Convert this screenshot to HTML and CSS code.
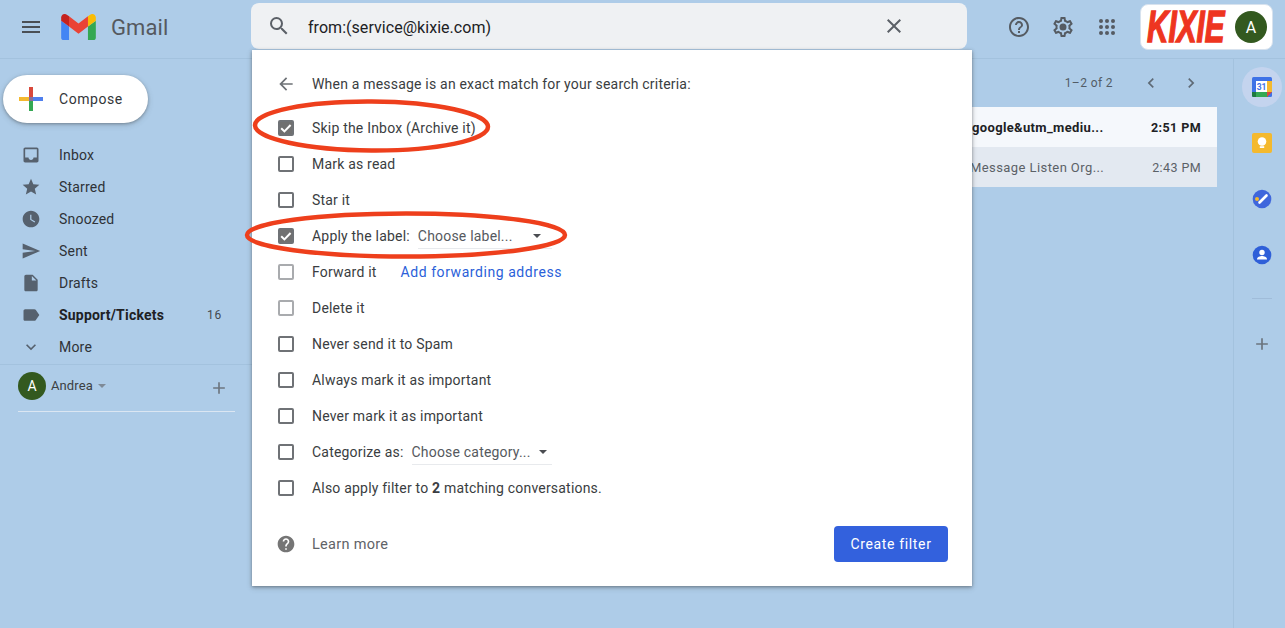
FILE: index.html
```html
<!DOCTYPE html>
<html lang="en">
<head>
<meta charset="utf-8">
<title>Gmail</title>
<link rel="stylesheet" href="styles.css">
</head>
<body>
<div class="app">
  <header class="topbar">
    <div class="brand">
      <svg class="ico menu-ico" viewBox="0 0 24 24"><path d="M3 18h18v-2H3v2zm0-5h18v-2H3v2zm0-7v2h18V6H3z"/></svg>
      <svg class="gmail-m" viewBox="52 42 88 66"><path fill="#4285f4" d="M58 108h14V74L52 59v43c0 3.32 2.69 6 6 6"/><path fill="#34a853" d="M120 108h14c3.32 0 6-2.69 6-6V59l-20 15"/><path fill="#fbbc04" d="M120 48v26l20-15v-8c0-7.42-8.47-11.65-14.4-7.2"/><path fill="#ea4335" d="M72 74V48l24 18 24-18v26L96 92"/><path fill="#c5221f" d="M52 51v8l20 15V48l-5.6-4.2c-5.94-4.45-14.4-.22-14.4 7.2"/></svg>
      <span class="gmail-word">Gmail</span>
    </div>
    <div class="searchbox">
      <svg class="ico search-ico" viewBox="0 0 24 24"><path d="M15.5 14h-.79l-.28-.27A6.471 6.471 0 0 0 16 9.5 6.5 6.5 0 1 0 9.5 16c1.61 0 3.09-.59 4.23-1.57l.27.28v.79l5 4.99L20.49 19l-4.99-5zm-6 0C7.01 14 5 11.99 5 9.5S7.01 5 9.5 5 14 7.01 14 9.5 11.99 14 9.5 14z"/></svg>
      <span class="query">from:(service@kixie.com)</span>
      <svg class="ico close-ico" viewBox="0 0 24 24"><path d="M19 6.41L17.59 5 12 10.59 6.41 5 5 6.41 10.59 12 5 17.59 6.41 19 12 13.41 17.59 19 19 17.59 13.41 12z"/></svg>
    </div>
    <div class="top-actions">
      <svg class="ico top-ico" viewBox="0 0 24 24"><path d="M11 18h2v-2h-2v2zm1-16C6.48 2 2 6.48 2 12s4.48 10 10 10 10-4.48 10-10S17.52 2 12 2zm0 18c-4.41 0-8-3.59-8-8s3.59-8 8-8 8 3.59 8 8-3.59 8-8 8zm0-14c-2.21 0-4 1.79-4 4h2c0-1.1.9-2 2-2s2 .9 2 2c0 2-3 1.75-3 5h2c0-2.25 3-2.5 3-5 0-2.21-1.79-4-4-4z"/></svg>
      <svg class="ico top-ico" viewBox="0 0 24 24"><path d="M19.43 12.98c.04-.32.07-.64.07-.98 0-.34-.03-.66-.07-.98l2.11-1.65c.19-.15.24-.42.12-.64l-2-3.46c-.09-.16-.26-.25-.44-.25-.06 0-.12.01-.17.03l-2.49 1c-.52-.4-1.08-.73-1.69-.98l-.38-2.65C14.46 2.18 14.25 2 14 2h-4c-.25 0-.46.18-.49.42l-.38 2.65c-.61.25-1.17.59-1.69.98l-2.49-1c-.06-.02-.12-.03-.18-.03-.17 0-.34.09-.43.25l-2 3.46c-.13.22-.07.49.12.64l2.11 1.65c-.04.32-.07.65-.07.98 0 .33.03.66.07.98l-2.11 1.65c-.19.15-.24.42-.12.64l2 3.46c.09.16.26.25.44.25.06 0 .12-.01.17-.03l2.49-1c.52.4 1.08.73 1.69.98l.38 2.65c.03.24.24.42.49.42h4c.25 0 .46-.18.49-.42l.38-2.65c.61-.25 1.17-.59 1.69-.98l2.49 1c.06.02.12.03.18.03.17 0 .34-.09.43-.25l2-3.46c.12-.22.07-.49-.12-.64l-2.11-1.65zm-1.98-1.71c.04.31.05.52.05.73 0 .21-.02.43-.05.73l-.14 1.13.89.7 1.08.84-.7 1.21-1.27-.51-1.04-.42-.9.68c-.43.32-.84.56-1.25.73l-1.06.43-.16 1.13-.2 1.35h-1.4l-.19-1.35-.16-1.13-1.06-.43c-.43-.18-.83-.41-1.23-.71l-.91-.7-1.06.43-1.27.51-.7-1.21 1.08-.84.89-.7-.14-1.13c-.03-.31-.05-.54-.05-.74s.02-.43.05-.73l.14-1.13-.89-.7-1.08-.84.7-1.21 1.27.51 1.04.42.9-.68c.43-.32.84-.56 1.25-.73l1.06-.43.16-1.13.2-1.35h1.39l.19 1.35.16 1.13 1.06.43c.43.18.83.41 1.23.71l.91.7 1.06-.43 1.27-.51.7 1.21-1.07.85-.89.7.14 1.13zM12 8.5a3.5 3.5 0 1 0 0 7 3.5 3.5 0 0 0 0-7z"/></svg>
      <svg class="ico top-ico" viewBox="0 0 24 24"><circle cx="6" cy="6" r="2"/><circle cx="12" cy="6" r="2"/><circle cx="18" cy="6" r="2"/><circle cx="6" cy="12" r="2"/><circle cx="12" cy="12" r="2"/><circle cx="18" cy="12" r="2"/><circle cx="6" cy="18" r="2"/><circle cx="12" cy="18" r="2"/><circle cx="18" cy="18" r="2"/></svg>
      <div class="account-card">
        <span class="kixie">KIXIE</span>
        <span class="avatar avatar-lg">A</span>
      </div>
    </div>
  </header>

  <div class="content">
    <aside class="sidebar">
      <button class="compose">
        <svg class="compose-plus" viewBox="0 0 24 24"><rect x="10" y="0" width="4" height="10" fill="#d9483b"/><rect x="14" y="10" width="10" height="4" fill="#4f7fee"/><rect x="10" y="14" width="4" height="10" fill="#34a853"/><rect x="0" y="10" width="10" height="4" fill="#f4b92e"/><rect x="10" y="10" width="4" height="4" fill="#8a6d9a"/></svg>
        <span>Compose</span>
      </button>
      <nav class="nav">
        <div class="nav-row"><svg class="ico nav-ico" viewBox="0 0 24 24"><path d="M19 3H5c-1.1 0-2 .9-2 2v14c0 1.1.9 2 2 2h14c1.1 0 2-.9 2-2V5c0-1.1-.9-2-2-2zm0 12h-4c0 1.66-1.34 3-3 3s-3-1.34-3-3H5V5h14v10z"/></svg><span>Inbox</span></div>
        <div class="nav-row"><svg class="ico nav-ico" viewBox="0 0 24 24"><path d="M12 17.27L18.18 21l-1.64-7.03L22 9.24l-7.19-.61L12 2 9.19 8.63 2 9.24l5.46 4.73L5.82 21z"/></svg><span>Starred</span></div>
        <div class="nav-row"><svg class="ico nav-ico" viewBox="0 0 24 24"><path d="M11.99 2C6.47 2 2 6.48 2 12s4.47 10 9.99 10C17.52 22 22 17.52 22 12S17.52 2 11.99 2zM16.2 16.2L11 13V7h1.5v5.2l4.5 2.7-.8 1.3z"/></svg><span>Snoozed</span></div>
        <div class="nav-row"><svg class="ico nav-ico" viewBox="0 0 24 24"><path d="M2.01 21L23 12 2.01 3 2 10l15 2-15 2z"/></svg><span>Sent</span></div>
        <div class="nav-row"><svg class="ico nav-ico" viewBox="0 0 24 24"><path d="M6 2c-1.1 0-1.99.9-1.99 2L4 20c0 1.1.89 2 1.99 2H18c1.1 0 2-.9 2-2V8l-6-6H6zm7 7V3.5L18.5 9H13z"/></svg><span>Drafts</span></div>
        <div class="nav-row nav-strong"><svg class="ico nav-ico" viewBox="0 0 24 24"><path d="M17.63 5.84C17.27 5.33 16.67 5 16 5L5 5.01C3.9 5.01 3 5.9 3 7v10c0 1.1.9 1.99 2 1.99L16 19c.67 0 1.27-.33 1.63-.84L22 12l-4.37-6.16z"/></svg><span>Support/Tickets</span><span class="nav-count">16</span></div>
        <div class="nav-row"><svg class="ico nav-ico" viewBox="0 0 24 24"><path d="M16.59 8.59L12 13.17 7.41 8.59 6 10l6 6 6-6z"/></svg><span>More</span></div>
      </nav>
      <div class="hangouts">
        <div class="hangouts-row">
          <span class="avatar avatar-sm">A</span>
          <span class="hangouts-name">Andrea</span>
          <span class="mini-caret"></span>
          <svg class="ico hangouts-add" viewBox="0 0 24 24"><path d="M19 13h-6v6h-2v-6H5v-2h6V5h2v6h6v2z"/></svg>
        </div>
      </div>
    </aside>

    <main class="mail">
      <div class="pager">
        <span class="pager-text">1–2 of 2</span>
        <svg class="ico pager-ico" viewBox="0 0 24 24"><path d="M15.41 7.41L14 6l-6 6 6 6 1.41-1.41L10.83 12z"/></svg>
        <svg class="ico pager-ico" viewBox="0 0 24 24"><path d="M8.59 16.59L10 18l6-6-6-6-1.41 1.41L13.17 12z"/></svg>
      </div>
      <div class="mail-row mail-unread"><span class="snippet">google&amp;utm_mediu...</span><span class="mail-time">2:51 PM</span></div>
      <div class="mail-row mail-read"><span class="snippet">Message Listen Org...</span><span class="mail-time">2:43 PM</span></div>
    </main>

    <aside class="rail">
      <div class="rail-slot rail-active">
        <svg class="rail-ico" viewBox="0 0 20 20">
          <rect width="20" height="20" rx="1.5" fill="#3f72e6"/>
          <rect x="15" y="4" width="5" height="11" fill="#f4b92e"/>
          <rect x="4" y="15" width="12" height="5" fill="#34a853"/>
          <path d="M0 15h4v5H1.5A1.5 1.5 0 0 1 0 18.5z" fill="#1f7a3f"/>
          <path d="M15 15h5l-5 5z" fill="#d9483b"/>
          <rect x="4" y="4" width="11" height="11" fill="#fff"/>
          <text class="cal-num" x="9.5" y="12.8" text-anchor="middle">31</text>
        </svg>
      </div>
      <div class="rail-slot"><svg class="rail-ico" viewBox="0 0 20 20"><rect width="20" height="20" rx="2" fill="#f4b92e"/><circle cx="10" cy="8.5" r="4.3" fill="#fff"/><rect x="7.8" y="13.2" width="4.4" height="1.8" fill="#fff"/></svg></div>
      <div class="rail-slot"><svg class="rail-ico" viewBox="0 0 20 20"><circle cx="10" cy="10" r="9.3" fill="#3f66dc"/><circle cx="5" cy="10" r="2" fill="#f4b92e"/><path d="M7.5 13.5l7-7" stroke="#fff" stroke-width="2.6" stroke-linecap="round"/></svg></div>
      <div class="rail-slot"><svg class="rail-ico" viewBox="0 0 20 20"><circle cx="10" cy="10" r="9.3" fill="#2f5fd8"/><circle cx="10" cy="7.5" r="2.7" fill="#fff"/><path d="M5 14.5c0-2.4 3-3.4 5-3.4s5 1 5 3.4z" fill="#fff"/></svg></div>
      <div class="rail-sep"></div>
      <svg class="ico rail-add" viewBox="0 0 24 24"><path d="M19 13h-6v6h-2v-6H5v-2h6V5h2v6h6v2z"/></svg>
    </aside>
  </div>
</div>

<section class="filter-panel">
  <div class="panel-head">
    <svg class="ico back-ico" viewBox="0 0 24 24"><path d="M20 11H7.83l5.59-5.59L12 4l-8 8 8 8 1.41-1.41L7.83 13H20v-2z"/></svg>
    <span>When a message is an exact match for your search criteria:</span>
  </div>
  <div class="opts">
    <div class="opt"><span class="box box-on"><svg viewBox="0 0 16 16"><path d="M3.2 8.2l3.2 3.2 6.2-6.4" fill="none" stroke="#fff" stroke-width="2"/></svg></span><span>Skip the Inbox (Archive it)</span></div>
    <div class="opt"><span class="box"></span><span>Mark as read</span></div>
    <div class="opt"><span class="box"></span><span>Star it</span></div>
    <div class="opt"><span class="box box-on"><svg viewBox="0 0 16 16"><path d="M3.2 8.2l3.2 3.2 6.2-6.4" fill="none" stroke="#fff" stroke-width="2"/></svg></span><span>Apply the label:</span><span class="select select-label"><span>Choose label...</span><i class="caret"></i></span></div>
    <div class="opt"><span class="box box-faint"></span><span>Forward it</span><a class="link">Add forwarding address</a></div>
    <div class="opt"><span class="box box-faint"></span><span>Delete it</span></div>
    <div class="opt"><span class="box"></span><span>Never send it to Spam</span></div>
    <div class="opt"><span class="box"></span><span>Always mark it as important</span></div>
    <div class="opt"><span class="box"></span><span>Never mark it as important</span></div>
    <div class="opt"><span class="box"></span><span>Categorize as:</span><span class="select select-cat"><span>Choose category...</span><i class="caret"></i></span></div>
    <div class="opt"><span class="box"></span><span>Also apply filter to <b>2</b> matching conversations.</span></div>
  </div>
  <div class="panel-foot">
    <svg class="ico learn-ico" viewBox="0 0 24 24"><path d="M12 2C6.48 2 2 6.48 2 12s4.48 10 10 10 10-4.48 10-10S17.52 2 12 2zm1 17h-2v-2h2v2zm2.07-7.75l-.9.92C13.45 12.9 13 13.5 13 15h-2v-.5c0-1.1.45-2.1 1.17-2.83l1.24-1.26c.37-.36.59-.86.59-1.41 0-1.1-.9-2-2-2s-2 .9-2 2H8c0-2.21 1.79-4 4-4s4 1.79 4 4c0 .88-.36 1.68-.93 2.25z"/></svg>
    <span class="learn">Learn more</span>
    <button class="create">Create filter</button>
  </div>
</section>

<svg class="annotations" viewBox="0 0 1285 628">
  <ellipse cx="371.5" cy="126" rx="116.5" ry="24.5" transform="rotate(.4 371.5 126)"/>
  <ellipse cx="406" cy="235" rx="159" ry="21.5"/>
</svg>
</body>
</html>
```
FILE: styles.css
```css
* { box-sizing: border-box; }
html, body { margin: 0; height: 100%; }
body {
  background: #aecce8;
  font-family: Roboto, "Noto Sans", sans-serif;
  font-size: 14px;
  color: #202124;
  overflow: hidden;
}
.app { display: flex; flex-direction: column; height: 628px; }
.ico { fill: #4f5b68; display: block; flex: none; }

/* top bar */
.topbar {
  height: 59px;
  flex: none;
  display: flex;
  align-items: flex-start;
  border-bottom: 1px solid #a3c2de;
}
.brand { width: 251px; height: 54px; display: flex; align-items: center; padding-left: 19px; flex: none; }
.menu-ico { width: 24px; height: 24px; fill: #4a4f55; }
.gmail-m { width: 35px; height: 26px; margin-left: 18px; display: block; }
.gmail-word { font-size: 22px; color: #55595f; margin-left: 15px; letter-spacing: .1px; }
.searchbox {
  margin-top: 3px;
  width: 716px;
  height: 46px;
  background: #eff1f3;
  border-radius: 8px;
  display: flex;
  align-items: center;
  padding-left: 16px;
  padding-right: 61px;
  flex: none;
}
.search-ico { width: 24px; height: 24px; fill: #5b6067; }
.query { font-size: 16px; color: #202124; margin-left: 17px; padding-top: 2px; letter-spacing: .04px; flex: 1; }
.close-ico { width: 24px; height: 24px; fill: #5b6067; }
.top-actions { display: flex; align-items: center; height: 46px; margin-top: 4px; flex: 1; padding-left: 40px; }
.top-ico { width: 24px; height: 24px; fill: #555b62; margin-right: 20px; }
.account-card {
  margin-left: 1px;
  width: 133px;
  height: 46px;
  background: #fff;
  border: 1px solid #d7e2ee;
  border-radius: 8px;
  display: flex;
  align-items: center;
  padding-left: 6px;
}
.kixie {
  font-family: "Liberation Sans", sans-serif;
  font-style: italic;
  font-weight: 700;
  font-size: 45px;
  line-height: 44px;
  color: #ee3520;
  display: block;
  flex: none;
  width: 115px;
  margin-right: -37px;
  transform: scaleX(.66);
  transform-origin: left center;
  -webkit-text-stroke: 1.4px #ee3520;
  white-space: nowrap;
}
.avatar {
  border-radius: 50%;
  background: #33591f;
  color: #fff;
  display: flex;
  align-items: center;
  justify-content: center;
  flex: none;
}
.avatar-lg { width: 32px; height: 32px; font-size: 16px; margin-left: 10px; }
.avatar-sm { width: 28px; height: 28px; font-size: 14px; }

/* body */
.content { flex: 1; display: flex; min-height: 0; }
.sidebar { width: 252px; flex: none; }
.compose {
  margin: 16px 0 16px 3px;
  width: 145px;
  height: 48px;
  border: 0;
  border-radius: 24px;
  background: #fff;
  box-shadow: 0 1px 3px rgba(60,64,67,.4), 0 2px 6px rgba(60,64,67,.2);
  display: flex;
  align-items: center;
  padding: 0 0 0 16px;
  font: 400 14px Roboto, sans-serif;
  letter-spacing: .55px;
  color: #33363a;
}
.compose-plus { width: 24px; height: 24px; margin-right: 16px; display: block; }
.nav-row { height: 32px; display: flex; align-items: center; padding: 0 30px 0 21px; font-size: 14px; color: #2f3237; letter-spacing: .2px; }
.nav-ico { width: 20px; height: 20px; margin-right: 18px; fill: #56616e; }
.nav-strong { font-weight: 700; color: #202124; }
.nav-count { margin-left: auto; font-size: 12px; font-weight: 400; color: #444a50; letter-spacing: .7px; }
.hangouts { margin-top: 1px; border-top: 1px solid #a3c2de; padding: 7px 17px 0 18px; }
.hangouts-row { display: flex; align-items: center; height: 40px; padding-bottom: 11px; border-bottom: 1px solid #dbe6f2; font-size: 13px; color: #3c4043; }
.hangouts-name { margin-left: 5px; letter-spacing: .1px; margin-top: -1px; }
.mini-caret { margin-left: 5px; border: 4px solid transparent; border-top-color: #7e8a97; border-bottom: 0; }
.hangouts-add { width: 20px; height: 20px; margin-left: auto; margin-right: 6px; margin-top: 3px; fill: #6d7680; }

/* mail list */
.mail { flex: 1; padding-right: 16px; min-width: 0; }
.pager { height: 48px; display: flex; align-items: center; justify-content: flex-end; padding-right: 16px; color: #4f5b68; }
.pager-text { font-size: 12px; letter-spacing: .4px; margin-right: 28px; color: #525c66; }
.pager-ico { width: 20px; height: 20px; fill: #5f6a76; }
.pager-ico + .pager-ico { margin-left: 20px; }
.mail-row { height: 40px; display: flex; align-items: center; padding-right: 16px; justify-content: flex-end; font-size: 13px; letter-spacing: .35px; }
.mail-unread { background: #f5f8fc; font-weight: 700; color: #202124; }
.mail-read { background: #e3e9f1; color: #5b6167; }
.snippet { margin-right: auto; padding-left: 720px; white-space: nowrap; }
.mail-read .snippet { padding-left: 718px; letter-spacing: .42px; }
.mail-time { font-size: 12.5px; letter-spacing: .4px; }

/* right rail */
.rail { width: 52px; flex: none; border-left: 1px solid #a3c2de; display: flex; flex-direction: column; align-items: center; padding: 8px 0 0 5px; }
.rail-slot { width: 40px; height: 40px; margin-bottom: 16px; display: flex; align-items: center; justify-content: center; border-radius: 50%; flex: none; }
.rail-active { background: #c4d4ee; }
.rail-ico { width: 20px; height: 20px; display: block; }
.cal-num { font: 700 8.5px Roboto, sans-serif; fill: #3f72e6; letter-spacing: -.2px; }
.rail-sep { width: 20px; height: 1px; background: #a0bcd9; margin-top: 7px; flex: none; }
.rail-add { width: 20px; height: 20px; margin-top: 35px; fill: #6b747e; }

/* filter panel overlay */
.filter-panel {
  position: absolute;
  left: 252px;
  top: 50px;
  width: 720px;
  height: 536px;
  background: #fff;
  box-shadow: 0 1px 3px rgba(60,64,67,.5), 0 2px 6px rgba(60,64,67,.2);
  padding: 16px 24px 24px 24px;
  display: flex;
  flex-direction: column;
  font-size: 14px;
  letter-spacing: .2px;
  color: #3a3d41;
}
.panel-head { height: 36px; display: flex; align-items: center; }
.back-ico { width: 20px; height: 20px; margin-right: 16px; fill: #6d7176; }
.opts { margin-top: 8px; display: flex; flex-direction: column; }
.opt { height: 36px; display: flex; align-items: center; white-space: nowrap; }
.box { width: 16px; height: 16px; margin: 0 18px 0 2px; border: 2px solid #6f7276; border-radius: 2px; flex: none; display: block; }
.box svg { display: block; width: 16px; height: 16px; margin: -2px; }
.box-on { background: #707070; }
.box-faint { border-color: #a9abae; }
.select { display: flex; align-items: center; height: 24px; border-bottom: 1px solid #e8eaed; margin-top: 1px; color: #55595e; letter-spacing: .2px; }
.select-label { margin-left: 8px; width: 134px; }
.select-cat { margin-left: 8px; width: 140px; }
.caret { border: 4.5px solid transparent; border-top-color: #4a4d51; border-bottom: 0; margin-left: auto; }
.select-label .caret { margin-right: 11px; }
.select-cat .caret { margin-right: 5px; }
.link { color: #2b5fd9; margin-left: 24px; font-weight: 400; letter-spacing: .56px; }
.panel-foot { margin-top: 20px; height: 36px; display: flex; align-items: center; }
.learn-ico { width: 20px; height: 20px; margin-right: 16px; fill: #757575; }
.learn { color: #5f6368; font-size: 14.5px; letter-spacing: .3px; }
.create {
  margin-left: auto;
  width: 114px;
  height: 36px;
  border: 0;
  border-radius: 4px;
  background: #3361dd;
  color: #fff;
  font: 400 14px Roboto, sans-serif;
  letter-spacing: .65px;
}
.annotations {
  position: absolute;
  left: 0;
  top: 0;
  width: 1285px;
  height: 628px;
  pointer-events: none;
  fill: none;
  stroke: #ee3f1c;
  stroke-width: 4.5;
}
```
